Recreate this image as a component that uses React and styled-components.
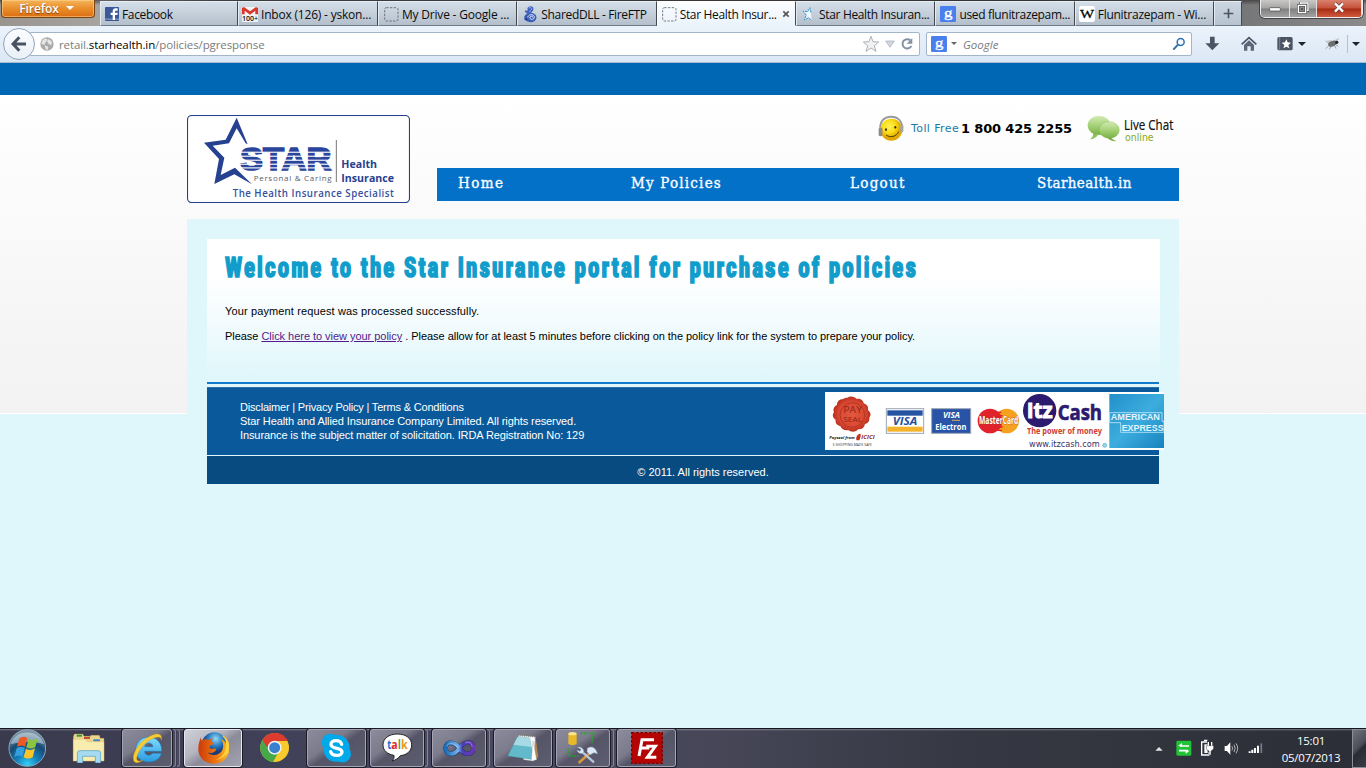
import React from "react";
import styled, { createGlobalStyle, css } from "styled-components";

const UI = '"Open Sans", "Noto Sans", sans-serif';
const BODY = '"Liberation Sans", Arial, sans-serif';

const Global = createGlobalStyle`
  * { box-sizing: border-box; }
  body { margin: 0; background: #dff7fb; font-family: ${BODY}; overflow: hidden; }
  svg { display: block; flex: none; }
`;

const Screen = styled.div`
  width: 1366px;
  height: 768px;
  display: flex;
  flex-direction: column;
  overflow: hidden;
`;

/* ---------- browser chrome ---------- */

const TabStrip = styled.div`
  height: 26px;
  flex: none;
  display: flex;
  background:
    linear-gradient(rgba(40, 38, 38, 0.6), rgba(60, 60, 60, 0) 5px),
    linear-gradient(90deg, #99948f 0, #a7a4a0 100px, #55565a 240px, #444 1040px, #77787a 1250px, #8b8b8c 1366px);
`;

const FirefoxButton = styled.button`
  width: 94px;
  height: 18px;
  margin: 0 5px 0 1px;
  padding: 0 3px 1px 0;
  display: flex;
  align-items: center;
  justify-content: center;
  gap: 7px;
  border: 1px solid #7a4412;
  border-top: 0;
  border-radius: 0 0 4px 4px;
  background: linear-gradient(#f4b55a, #e98d2b 50%, #dc6f12);
  box-shadow: inset 0 0 0 1px rgba(255, 215, 150, 0.55);
  color: #fff;
  font: 600 12px ${UI};
  line-height: 17px;
  letter-spacing: -0.1px;
  text-shadow: 0 1px 1px rgba(90, 40, 0, 0.7);
`;

const Triangle = styled.i`
  width: 0;
  height: 0;
  flex: none;
  border: ${(p) => p.$size || 4}px solid transparent;
  border-bottom: 0;
  border-top: ${(p) => p.$h || p.$size || 4}px solid ${(p) => p.$color || "#fff"};
`;

const Tab = styled.div`
  width: ${(p) => p.$w || 139.35}px;
  height: 25px;
  flex: none;
  display: flex;
  align-items: center;
  margin-top: 1px;
  padding: 1px 5px 0 ${(p) => p.$pl ?? 5}px;
  gap: ${(p) => p.$gap ?? 3}px;
  border-right: 1px solid #43484f;
  border-left: 1px solid #e3eaf1;
  border-top: 1px solid #e6edf4;
  border-bottom: 1px solid #6f7b88;
  background: linear-gradient(#d4dee8, #c3ced9 55%, #b3bfcb);
  color: #0c0c0c;
  font: 12px ${UI};
  letter-spacing: ${(p) => p.$ls ?? -0.34}px;
  white-space: nowrap;
  ${(p) =>
    p.$active &&
    css`
      background: linear-gradient(#fcfdfe, #ebf3fb);
      border-color: #fff #43484f #ebf3fb #fff;
    `}
`;

const TabLabel = styled.span`
  flex: 1;
`;

const NewTab = styled(Tab)`
  width: 28px;
  justify-content: center;
  padding: 0;
  background: linear-gradient(#cbd6e1, #b7c3cf);
`;

const WindowButtons = styled.div`
  width: 103px;
  height: 18px;
  margin-left: 18px;
  display: flex;
  border: 1px solid #eee;
  border-top: 0;
  border-radius: 0 0 5px 5px;
  overflow: hidden;
  box-shadow: 0 0 0 1px #444;
`;

const WindowButton = styled.button`
  width: ${(p) => p.$w}px;
  padding: 0 0 2px;
  display: flex;
  align-items: center;
  justify-content: center;
  border: 0;
  border-right: 1px solid #e0e0e0;
  background: ${(p) =>
    p.$close
      ? "linear-gradient(#d9826f, #c5513a 48%, #a82a12 52%, #cf5a3e)"
      : "linear-gradient(#c9c8c6, #a5a4a4 48%, #7f7f80 52%, #a3a3a4)"};
`;

const Toolbar = styled.div`
  height: 37px;
  flex: none;
  display: flex;
  align-items: center;
  padding: 0 0 1px 3px;
  background: linear-gradient(#ebf3fb, #dbe7f5);
  border-bottom: 1px solid #a7bace;
`;

const BackButton = styled.button`
  width: 32px;
  height: 32px;
  flex: none;
  padding: 0;
  display: flex;
  align-items: center;
  justify-content: center;
  border: 1px solid #93a4b8;
  border-radius: 50%;
  background: linear-gradient(#fbfdff, #e9f0f8);
  z-index: 1;
`;

const Field = styled.div`
  height: 24px;
  width: ${(p) => p.$w}px;
  flex: none;
  display: flex;
  align-items: center;
  border: 1px solid #a3b5c9;
  border-radius: 2px;
  background: #fff;
  font: 11.5px ${UI};
  color: #7c7c7c;
  white-space: nowrap;
`;

const UrlField = styled(Field)`
  margin-left: -6px;
  padding: 0 5px 0 10px;
  gap: 5px;
  letter-spacing: ${(p) => p.$ls}px;
  b { font-weight: 400; color: #000; }
`;

const Url = styled.span`
  flex: 1;
  padding-top: 1px;
`;

const SearchField = styled(Field)`
  margin-left: 6px;
  padding: 0 5px 0 4px;
  gap: 4px;
`;

const Placeholder = styled.em`
  flex: 1;
  padding: 1px 0 0 2px;
  letter-spacing: 0;
`;

const ToolIcons = styled.div`
  display: flex;
  align-items: center;
  padding-left: 13px;
`;

const ToolIcon = styled.span`
  display: flex;
  align-items: center;
  gap: 5px;
  margin-right: ${(p) => p.$mr || 0}px;
`;

const ToolDivider = styled.span`
  width: 1px;
  height: 18px;
  background: #b4c0cf;
  margin-right: 4px;
`;

/* ---------- web page ---------- */

const Page = styled.main`
  flex: 1;
  min-height: 0;
  display: flex;
  flex-direction: column;
  align-items: center;
  border-top: 32px solid #0067b4;
  background: linear-gradient(#fff, #f2f2f3) 0 0 / 100% 318px no-repeat, linear-gradient(#fff, #fff) 0 318px / 100% 1px no-repeat, #dff7fb;
`;

const Header = styled.header`
  width: 992px;
  height: 124px;
  flex: none;
  display: flex;
  gap: 27px;
  padding-top: 20px;
`;

const HeaderMain = styled.div`
  width: 742px;
  display: flex;
  flex-direction: column;
`;

const Contact = styled.div`
  height: 53px;
  display: flex;
  align-items: flex-start;
  padding-left: 441px;
`;

const TollFree = styled.span`
  width: 49px;
  margin: 7px 0 0 7px;
  color: #1a7ba8;
  font: 11px/14px "DejaVu Sans", Verdana, sans-serif;
  letter-spacing: 0.4px;
  white-space: nowrap;
`;

const Phone = styled.b`
  width: 111px;
  margin: 6px 0 0 1px;
  color: #000;
  font: bold 13px/16px "DejaVu Sans", Verdana, sans-serif;
  letter-spacing: -0.15px;
  white-space: nowrap;
`;

const ChatSlot = styled.div`
  margin: -5px -10px 0 14.5px;
`;

const Nav = styled.nav`
  height: 33px;
  display: flex;
  padding-left: 21px;
  background: #0471c9;
`;

const NavItem = styled.a`
  width: ${(p) => p.$w}px;
  color: #f8fcff;
  font: 15px/31px "DejaVu Serif Condensed", "DejaVu Serif", serif;
  font-stretch: condensed;
  letter-spacing: ${(p) => p.$ls}px;
  -webkit-text-stroke: 0.35px #f8fcff;
  white-space: nowrap;
`;

const Content = styled.section`
  width: 992px;
  flex: 1;
  padding: 20px 19px 0 20px;
  background: #dff7fb;
`;

const Panel = styled.article`
  height: 143px;
  padding: 12px 18px 0;
  background: linear-gradient(#fff, #fff 35px, #f2fbfd 85px, #dff7fb 138px);
`;

const Title = styled.h1`
  margin: 0 0 18px;
  height: 35px;
  color: #119dcb;
  font: bold 27px/35px "Liberation Sans Narrow", "Roboto Condensed", ${BODY};
  letter-spacing: 2.55px;
  -webkit-text-stroke: 1.6px #119dcb;
  white-space: nowrap;
  transform: scaleX(0.8475);
  transform-origin: 0 0;
`;

const Para = styled.p`
  margin: 0 0 11px;
  color: #000;
  font: 11px/14px ${BODY};
  letter-spacing: ${(p) => p.$ls || 0}px;
  white-space: nowrap;
  a { color: #551a8b; text-decoration: underline; }
`;

const Footer = styled.footer`
  width: 952px;
  border-top: 2px solid #1279cb;
  padding-top: 3px;
`;

const FooterMain = styled.div`
  height: 68px;
  display: flex;
  justify-content: space-between;
  padding: 5px 0 0 33px;
  background: #0a5a9b;
  border-top: 1px solid #2a6ea8;
`;

const FooterText = styled.div`
  padding-top: 7px;
  color: #fff;
  font: 11px/14px ${BODY};
  white-space: nowrap;
`;

const FooterLine = styled.div`
  letter-spacing: ${(p) => p.$ls}px;
`;

const CardsSlot = styled.div`
  margin: -1px -5px 0 0;
`;

const Copyright = styled.div`
  height: 29px;
  padding: 9px 0 0 40px;
  border-top: 1px solid #e6f6fb;
  background: #084b80;
  color: #fff;
  font: 11px/14px ${BODY};
  text-align: center;
`;

/* ---------- taskbar ---------- */

const Taskbar = styled.div`
  height: 40px;
  flex: none;
  display: flex;
  align-items: flex-start;
  border-top: 1px solid #16161e;
  background:
    linear-gradient(rgba(190, 190, 205, 0.5), rgba(190, 190, 205, 0) 2px),
    linear-gradient(90deg, #3a3a4d 0, #403f58 240px, #4b4a63 560px, #464657 720px, #363843 960px, #2c2e37 1366px);
`;

const Task = styled.div`
  width: ${(p) => p.$w}px;
  height: 38px;
  flex: none;
  margin-left: ${(p) => p.$ml || 0}px;
  display: flex;
  align-items: center;
  justify-content: center;
  ${(p) =>
    p.$open &&
    css`
      border: 1px solid #a4a4b2;
      border-radius: 3px;
      box-shadow: 0 0 0 1px #1c1c28;
      background: linear-gradient(145deg, #8b8b9b 0, #7b7b8c 38%, #555567 52%, #5d5d70 100%);
    `}
  ${(p) =>
    p.$active &&
    css`
      border-color: #e6e6ee;
      background: linear-gradient(145deg, #d0d0d8 0, #b5b5c0 38%, #8b8b9a 55%, #a2a2b0 100%);
    `}
`;

const Stack = styled.span`
  width: 3px;
  height: 38px;
  flex: none;
  margin-left: 1px;
  border: 1px solid #85859a;
  border-left: 0;
  border-radius: 0 3px 3px 0;
  background: #4a4a5c;
`;

const Tray = styled.div`
  height: 39px;
  margin-left: auto;
  display: flex;
  align-items: center;
`;

const Clock = styled.div`
  width: 62px;
  margin: 0 10px 0 16px;
  color: #fff;
  font: 11.5px/17px ${UI};
  letter-spacing: -0.25px;
  text-align: center;
`;

const ShowDesktop = styled.div`
  width: 14px;
  height: 39px;
  border: 1px solid #8b8e96;
  border-right: 0;
  background: linear-gradient(135deg, #70737d 0, #4c4f59 45%, #292b34 55%, #3a3c46);
`;

/* Drawings share one unit system: three drawing units to a pixel. */
const Art = ({ box, children }) => {
  const [, , w, h] = box.split(" ").map(Number);
  return (
    <svg viewBox={box} width={w / 3} height={h / 3}>
      {children}
    </svg>
  );
};

const Txt = ({ w, children, family = "Open Sans", ...rest }) => (
  <text
    textLength={w}
    lengthAdjust="spacingAndGlyphs"
    fontFamily={`"${family}", sans-serif`}
    {...rest}
  >
    {children}
  </text>
);

const FacebookIcon = () => (
  <Art box="0 0 42 42">
    <rect width="42" height="42" rx="2" fill="#3b5998" />
    <rect y="34" width="42" height="5" fill="#7187b5" />
    <path d="M23 39V24h-6v-7h6v-4c0-6 4-9 9-9h6v7h-4c-3 0-4 1-4 3v3h8l-1 7h-7v15z" fill="#fff" />
  </Art>
);

const GmailIcon = () => (
  <Art box="0 0 48 45">
    <rect width="48" height="45" rx="3" fill="#f3f3f3" />
    <path d="M0 22V3l6-3 18 13L42 0l6 3v19h-8V11L24 23 8 11v11z" fill="#d9372c" />
    <Txt x="0" y="42" w="48" fontSize="20" fill="#111" fontWeight="600">100+</Txt>
  </Art>
);

const BlankIcon = () => (
  <Art box="0 0 45 45">
    <rect x="2" y="2" width="40" height="40" rx="5" fill="none" stroke="#555c66" strokeWidth="2.4" strokeDasharray="7 4" />
  </Art>
);

const FtpIcon = () => (
  <Art box="0 0 45 51">
    <path d="M16 3c9-5 17 0 15 8-1 5-6 6-6 10 10 0 17 7 15 16-2 10-12 13-21 11-9-1-16-7-15-14 1-6 5-9 9-13-6-1-9-4-7-7 3-2 8 1 9-2-3-3-2-7 1-9z" fill="#3e5fb9" />
    <path d="M17 6c5-3 10 0 9 4-2 4-7 5-6 9" fill="none" stroke="#9db4ea" strokeWidth="3" />
    <path d="M30 35c0-5-7-6-9-2s2 8 7 7c7-1 8-10 2-13-8-3-16 2-16 9" fill="none" stroke="#dbe5fa" strokeWidth="3" />
    <path d="M4 39l10-4-4 8zM3 31l9-1" fill="#22378d" stroke="#22378d" />
  </Art>
);

const StarTabIcon = () => (
  <Art box="0 0 42 48">
    <path d="M27 20L24 5l-7 12-14-1 10 11-6 15 13-7 9 8" fill="#eef6fc" stroke="#3a97d0" strokeWidth="3" strokeDasharray="8 2" />
  </Art>
);

const GoogleIcon = () => (
  <Art box="0 0 48 48">
    <rect width="48" height="48" rx="4" fill="#4a80ee" />
    <Txt x="12" y="34" w="25" fontSize="40" family="Liberation Serif" fill="#fff" stroke="#fff" strokeWidth="1">g</Txt>
  </Art>
);

const WikiIcon = () => (
  <Art box="0 0 48 48">
    <rect width="48" height="48" rx="7" fill="#fff" />
    <Txt x="3" y="37" w="42" fontSize="38" family="Liberation Serif" stroke="#000" strokeWidth="0.8">W</Txt>
  </Art>
);

const StarLogo = () => (
  <Art box="21 30 669 264">
    <rect x="22.5" y="31.5" width="666" height="261" rx="13" fill="#fff" stroke="#243f8f" strokeWidth="3.4" />
    <path d="M203 118L170 38 137 104 72 113 117 162 103 237 163 208 216 238 165 188 122 210 133 158 98 122 147 115 170 70 197 115z" fill="#26418f" />
    <Txt x="180" y="196" w="274" fontSize="92" family="Liberation Sans" fontWeight="bold" fill="#2a459b" stroke="#2a459b" strokeWidth="4.5">STAR</Txt>
    {[140, 152, 164, 176, 187].map((y) => (
      <rect key={y} x="176" y={y} width="285" height="3.4" fill="#fff" />
    ))}
    <path d="M469 105V231" stroke="#777" strokeWidth="3" />
    <Txt x="221" y="227" w="236" fontSize="22" fill="#5c606a" letterSpacing="2">Personal &amp; Caring</Txt>
    <Txt x="484" y="189" w="107" fontSize="34" fontWeight="bold" fill="#26418f">Health</Txt>
    <Txt x="484" y="230" w="158" fontSize="34" fontWeight="bold" fill="#26418f">Insurance</Txt>
    <Txt x="158" y="277" w="485" fontSize="30" fontWeight="600" letterSpacing="1.5" fill="#3650a0">The Health Insurance Specialist</Txt>
  </Art>
);

const Smiley = () => (
  <Art box="235 28 78 82">
    <defs>
      <radialGradient id="smile" cx="0.4" cy="0.35">
        <stop offset="0" stopColor="#fff45a" />
        <stop offset="0.6" stopColor="#fbdc14" />
        <stop offset="1" stopColor="#e0a800" />
      </radialGradient>
    </defs>
    <path d="M243 78c-6-30 10-45 32-45 20 0 32 14 33 34" fill="none" stroke="#9a9a9e" strokeWidth="6" />
    <circle cx="275" cy="72" r="33" fill="url(#smile)" />
    <rect x="237" y="66" width="11" height="26" rx="5" fill="#8a8a8f" />
    <rect x="302" y="58" width="9" height="22" rx="4" fill="#a5a5a9" />
    <ellipse cx="259" cy="72" rx="3" ry="4" fill="#3a2e00" />
    <ellipse cx="287" cy="65" rx="3" ry="4" fill="#3a2e00" />
    <path d="M259 88c14 10 32 4 38-10" fill="none" stroke="#4b3a00" strokeWidth="3" />
  </Art>
);

const LiveChat = () => (
  <Art box="860 13 280 112">
    <defs>
      <linearGradient id="bubble" x2="0" y2="1">
        <stop offset="0" stopColor="#d3ebb4" />
        <stop offset="0.5" stopColor="#a6d279" />
        <stop offset="1" stopColor="#79b043" />
      </linearGradient>
    </defs>
    <path d="M878 82c2 8-3 15-10 19 12-1 21-7 25-14z" fill="#8cbf59" />
    <ellipse cx="896" cy="59" rx="34" ry="29" fill="url(#bubble)" />
    <path d="M930 90c2 7 8 13 20 17-15 1-26-5-31-13z" fill="#7aae45" />
    <ellipse cx="927" cy="73" rx="30" ry="25" fill="url(#bubble)" stroke="#7fb54d" />
    <Txt x="971" y="73" w="148" fontSize="46" fill="#111" stroke="#111" strokeWidth="0.7">Live Chat</Txt>
    <Txt x="974" y="106" w="86" fontSize="30" family="DejaVu Sans" fill="#83ab20">online</Txt>
  </Art>
);

const sealPath =
  "M82 68c8-6 22-4 28 4 10-2 20 4 21 13 9 3 15 10 13 20 9 8 10 16 4 23 1 11-5 17-13 19-2 11-10 17-20 16-8 9-22 9-30 2-11 3-21-3-24-12-10-2-16-10-14-19-9-5-11-15-5-22-4-10 1-19 9-22 0-11 8-18 17-17 3-3 8-5 14-5z";

const PaymentLogos = () => (
  <Art box="15 51 1017 174">
    <defs>
      <linearGradient id="amex" x2="1" y2="1">
        <stop offset="0" stopColor="#2190ca" />
        <stop offset="0.5" stopColor="#3dadde" />
        <stop offset="1" stopColor="#1683bf" />
      </linearGradient>
      <radialGradient id="seal">
        <stop offset="0" stopColor="#e2593f" />
        <stop offset="0.7" stopColor="#da4932" />
        <stop offset="1" stopColor="#b82e1d" />
      </radialGradient>
    </defs>
    <rect x="15" y="51" width="1017" height="174" fill="#fff" />
    <path d={sealPath} fill="url(#seal)" />
    <circle cx="97" cy="120" r="37" fill="none" stroke="#b93422" strokeWidth="3" />
    <g fill="#8e2418">
      <Txt x="70" y="114" w="56" fontSize="27">PAY</Txt>
      <Txt x="70" y="142" w="56" fontSize="22">SEAL</Txt>
    </g>
    <Txt x="28" y="193" w="76" fontSize="12" fontWeight="bold" fontStyle="italic" fill="#222">Payseal from</Txt>
    <path d="M110 196c-5-8 3-21 11-20 3 4-1 15-3 20z" fill="#c8321d" />
    <Txt x="124" y="193" w="40" fontSize="16" fontWeight="bold" fontStyle="italic" fill="#8e2b19">ICICI</Txt>
    <Txt x="38" y="213" w="118" fontSize="10" fill="#333">E-SHOPPING MADE SAFE</Txt>

    <rect x="199" y="101" width="112" height="74" fill="#fff" stroke="#9ba6b4" strokeWidth="3" />
    <rect x="202" y="106" width="106" height="16" fill="#2453a2" />
    <rect x="202" y="155" width="106" height="15" fill="#f4b32c" />
    <Txt x="218" y="150" w="74" fontSize="34" fontWeight="bold" fontStyle="italic" fill="#2350a0">VISA</Txt>

    <rect x="335" y="101" width="117" height="74" fill="#2853a6" stroke="#9ba6b4" strokeWidth="3" />
    <Txt x="369" y="130" w="51" fontSize="25" fontWeight="bold" fontStyle="italic" fill="#fff">VISA</Txt>
    <path d="M396 136h24" stroke="#d8a94a" strokeWidth="3" />
    <Txt x="346" y="166" w="93" fontSize="24" fontWeight="bold" fill="#fff">Electron</Txt>

    <circle cx="560" cy="138" r="37" fill="#f6a01f" />
    <circle cx="510" cy="138" r="37" fill="#e0222a" />
    <path d="M530 112h14M526 122h22M526 156h22M532 166h14" stroke="#e0222a" strokeWidth="4" />
    <Txt x="477" y="147" w="118" fontSize="29" fontWeight="bold" fill="#fff" stroke="#a5342a" strokeWidth="2" paintOrder="stroke">MasterCard</Txt>

    <circle cx="659" cy="107" r="50" fill="#2b1a6e" />
    <Txt x="620" y="130" w="78" fontSize="66" fontWeight="bold" fill="#fff" stroke="#fff" strokeWidth="3">Itz</Txt>
    <Txt x="713" y="135" w="133" fontSize="64" fontWeight="bold" fill="#2b1a6e" stroke="#2b1a6e" strokeWidth="2">Cash</Txt>
    <Txt x="621" y="178" w="225" fontSize="24" fontWeight="bold" fill="#cf3b35">The power of money</Txt>
    <Txt x="627" y="217" w="212" fontSize="24" family="DejaVu Sans" fill="#39306f">www.itzcash.com</Txt>
    <circle cx="854" cy="211" r="6" fill="#9bd6e8" stroke="#4cb0cd" strokeWidth="2" />

    <rect x="868" y="57" width="164" height="162" fill="url(#amex)" />
    <path d="M869 113h157v26h6v33H902v-29h-33z" fill="none" stroke="#bfe4f5" strokeWidth="2.5" />
    <g fontWeight="bold" fill="#e2f4fc">
      <Txt x="872" y="136" w="148" fontSize="26" family="Liberation Sans">AMERICAN</Txt>
      <Txt x="905" y="167" w="126" fontSize="26" family="Liberation Sans">EXPRESS</Txt>
    </g>
  </Art>
);

const StartOrb = () => (
  <Art box="23 28 116 114">
    <defs>
      <radialGradient id="orb" cx="0.5" cy="0.95" r="0.85">
        <stop offset="0" stopColor="#37d0f5" />
        <stop offset="0.35" stopColor="#1481bd" />
        <stop offset="0.7" stopColor="#174a72" />
        <stop offset="1" stopColor="#7b93a5" />
      </radialGradient>
    </defs>
    <circle cx="81" cy="85" r="55" fill="url(#orb)" stroke="#8aa9bd" strokeWidth="3" />
    <path d="M31 74a51 44 0 0 1 100 0c-30-10-68-8-100 0z" fill="#d7e7ef" opacity="0.5" />
    <path d="M57 56c8-6 16-6 24-1l-7 26c-8-5-16-5-24 1z" fill="#ee5a24" />
    <path d="M85 57c8 5 17 5 27-1l-7 26c-9 6-18 6-27 1z" fill="#8cc43f" />
    <path d="M49 86c8-6 16-5 24-1l-7 26c-8-5-16-5-24 1z" fill="#35a0e0" />
    <path d="M77 87c9 5 18 5 27-1l-7 27c-9 5-18 5-27 0z" fill="#fcc527" />
  </Art>
);

const ExplorerIcon = () => (
  <Art box="216 41 102 92">
    <path d="M220 52l3-8h25l4 7h20v-3h26l3 9h11v68l-92 0z" fill="#ead78c" stroke="#b99c44" />
    <rect x="230" y="46" width="16" height="6" fill="#2e9a43" />
    <rect x="252" y="53" width="18" height="6" fill="#cf4a30" />
    <rect x="280" y="60" width="20" height="6" fill="#3c84c4" />
    <path d="M220 60h36l5 7h51v58h-92z" fill="#f8ecae" stroke="#d1b765" />
    <path d="M232 131V101q0-7 8-7h54q8 0 8 7v30h-16v-20h-38v20z" fill="#a5daf0" stroke="#4a9ac2" strokeWidth="2" />
  </Art>
);

const IeIcon = () => (
  <Art box="392 32 96 96">
    <defs>
      <linearGradient id="ie" x2="0" y2="1">
        <stop offset="0" stopColor="#7fdcff" />
        <stop offset="1" stopColor="#2a9be0" />
      </linearGradient>
    </defs>
    <path d="M484 90h-51c0 12 14 17 24 6h26c-7 37-77 35-77-9 0-53 81-53 78 3zm-51-14h25c-2-15-23-15-25 0z" fill="url(#ie)" stroke="#197ec2" strokeWidth="1.5" />
    <path d="M483 58c6-30-25-23-52-2-31 24-42 68-22 68 6 0 12-3 18-7-32 13-16-30 10-52 24-20 48-24 46-7z" fill="#f8cc32" stroke="#cf9612" />
  </Art>
);

const FirefoxIcon = () => (
  <Art box="590 34 98 96">
    <defs>
      <radialGradient id="globe" cx="0.55" cy="0.25">
        <stop offset="0" stopColor="#8edcf7" />
        <stop offset="0.6" stopColor="#2876bd" />
        <stop offset="1" stopColor="#183a78" />
      </radialGradient>
      <linearGradient id="fox" x1="0" x2="1">
        <stop offset="0" stopColor="#cc3a08" />
        <stop offset="0.6" stopColor="#ee7a14" />
        <stop offset="1" stopColor="#fcc931" />
      </linearGradient>
    </defs>
    <circle cx="642" cy="74" r="39" fill="url(#globe)" />
    <path d="M602 50c0 6 1 8 3 10 6-5 15-5 21-2 6-4 12-5 12-5l-5 8 8 8-12 6c-5 6 2 12 10 9 6-2 10 2 7 6-7 9-20 8-24 5 10 14 38 10 45-10 4-12 0-24-6-30 9 2 15 9 16 15 1-9-3-20-9-27 13 7 21 24 20 40-2 28-22 46-48 46-27 0-47-20-46-45 0-13 4-27 8-34z" fill="url(#fox)" />
    <path d="M667 48c12 9 15 31 5 48-6 11-16 19-28 21 23 0 39-16 42-38-1-16-9-29-19-35z" fill="#fddc45" opacity="0.8" />
  </Art>
);

const ChromeIcon = () => (
  <Art box="780 40 88 88">
    <circle cx="824" cy="84" r="43" fill="#f7cb2c" />
    <path d="M787 62a43 43 0 0 1 76 2h-39l-20 30z" fill="#dc3b2e" />
    <path d="M787 62a43 43 0 0 0 32 65l20-35-31 0z" fill="#45a849" />
    <circle cx="824" cy="84" r="21" fill="#f2f4f6" />
    <circle cx="824" cy="84" r="16.5" fill="#3a80d0" />
  </Art>
);

const SkypeIcon = () => (
  <Art box="0 0 92 92">
    <path d="M28 2c9 0 12 4 18 4 24-1 42 18 40 43 8 14 3 31-10 37-8 4-16 2-22 0C25 90 6 71 8 46-4 26 6 2 28 2z" fill="#00a9ea" />
    <path d="M62 34c-4-15-32-14-32 0 0 17 33 8 33 23 0 14-30 14-34-1" fill="none" stroke="#fff" strokeWidth="10" strokeLinecap="round" />
  </Art>
);

const TalkIcon = () => (
  <Art box="90 38 92 88">
    <path d="M136 41c27 0 43 14 43 33 0 18-14 30-34 32-5 7-13 13-25 16 6-6 7-11 6-17-19-3-33-14-33-31 0-19 17-33 43-33z" fill="#fff" stroke="#222" strokeWidth="3" />
    <g fontSize="37" fontWeight="bold">
      <Txt x="106" y="87" w="12" fill="#2569d4">t</Txt>
      <Txt x="118" y="87" w="19" fill="#e12a26">a</Txt>
      <Txt x="138" y="87" w="8" fill="#35a236">l</Txt>
      <Txt x="147" y="87" w="20" fill="#f09515">k</Txt>
    </g>
  </Art>
);

const VisualStudioIcon = () => (
  <Art box="274 56 98 56">
    <defs>
      <linearGradient id="vs">
        <stop offset="0" stopColor="#1b6fb8" />
        <stop offset="0.45" stopColor="#74b4ea" />
        <stop offset="0.6" stopColor="#4a3fb8" />
        <stop offset="1" stopColor="#6a38b4" />
      </linearGradient>
    </defs>
    <path d="M323 84C307 61 282 63 282 84s25 23 41 0 42-23 42-1-26 24-42 1z" fill="none" stroke="#1f2a55" strokeWidth="14" />
    <path d="M323 84C307 61 282 63 282 84s25 23 41 0 42-23 42-1-26 24-42 1z" fill="none" stroke="url(#vs)" strokeWidth="12" />
    <path d="M285 77c5-11 23-10 34 5M341 67c12-5 20 2 20 12" fill="none" stroke="#c6e2fa" strokeWidth="2" opacity="0.7" />
  </Art>
);

const NotepadIcon = () => (
  <Art box="470 38 98 90">
    <path d="M556 52l8 58-18 13-6-6z" fill="#b08a48" />
    <path d="M503 45l52 4-5 73-30-4z" fill="#fafafa" stroke="#999" />
    <path d="M502 49l36 4 12 65-78-11z" fill="#62b9c9" stroke="#3f94a6" />
    <path d="M502 49l36 4 5 27-54-7z" fill="#bfe6ee" opacity="0.75" />
    <path d="M548 62l11 56-16 4z" fill="#fff" stroke="#999" />
    <path d="M504 44l51 4" stroke="#777" strokeWidth="7" strokeDasharray="2 4" />
  </Art>
);

const SqlIcon = () => (
  <Art box="649 35 98 100">
    <path d="M653 44v28c0 7 25 7 25 0V44z" fill="#e9b928" />
    <ellipse cx="665.5" cy="43" rx="12.5" ry="5" fill="#fce68c" />
    <path d="M692 42h33v32M653 88v22h30" fill="none" stroke="#1fae22" strokeWidth="5" strokeDasharray="4 4" />
    <path d="M716 102l-32 29" stroke="#d69737" strokeWidth="8" />
    <path d="M696 99l34 30" stroke="#b8c8da" strokeWidth="7" />
    <path d="M680 84c10-4 22 4 19 17-10 5-20-2-20-9l9 4 3-6zM710 86c14-8 26-1 31 18l-11-4-12 7-9-10z" fill="#dbe8f6" stroke="#7b8fa8" strokeWidth="1.5" />
  </Art>
);

const FileZillaIcon = () => (
  <Art box="843 36 96 96">
    <rect x="845" y="38" width="92" height="92" fill="#b40404" stroke="#7d0000" strokeWidth="4" strokeDasharray="8 5" />
    <path d="M867 108l9-49h36M872 84h26M889 79h27l-24 33h27" fill="none" stroke="#fff" strokeWidth="9" />
  </Art>
);

const TrayIcons = () => (
  <Art box="76 60 328 56">
    <path d="M77 95l11-11 11 11z" fill="#e4e4e8" />
    <rect x="140" y="65" width="45" height="45" rx="4" fill="#20c236" />
    <path d="M150 81h28M175 95h-27" stroke="#fff" strokeWidth="5" />
    <path d="M157 72l-12 9h12zM168 104l12-9h-12z" fill="#fff" />
    <path d="M232 69h-16v39h22v-9M223 64h10" fill="none" stroke="#fff" strokeWidth="4" />
    <path d="M224 76v26h10V76z" fill="#fff" />
    <path d="M230 80h22v8q-3 7-8 8v12h-6V96q-7-1-8-8z" fill="#fff" stroke="#33343f" strokeWidth="1.5" />
    <path d="M236 80V69M246 80V69" stroke="#fff" strokeWidth="4" />
    <path d="M285 81h7l10-11v37l-10-11h-7z" fill="#fff" />
    <path d="M307 82q4 6 0 12M313 77q7 11 0 22M319 73q10 15 0 30" fill="none" stroke="#d6d6da" strokeWidth="2.4" />
    <path d="M360 102v-5M368 102v-10M376 102V87M385 102V80" stroke="#fff" strokeWidth="6" />
    <path d="M395 102V73" stroke="#7b7d86" strokeWidth="5" />
  </Art>
);

export default function App() {
  return (
    <>
      <Global />
      <Screen>
        <TabStrip>
          <FirefoxButton>
            Firefox <Triangle $size={4} $h={4} />
          </FirefoxButton>
          <Tab $w={138} $pl={4}><FacebookIcon /><TabLabel>Facebook</TabLabel></Tab>
          <Tab $w={140} $pl={3} $gap={3} $ls={-0.2}><GmailIcon /><TabLabel>Inbox (126) - yskon...</TabLabel></Tab>
          <Tab $ls={-0.2}><BlankIcon /><TabLabel>My Drive - Google ...</TabLabel></Tab>
          <Tab><FtpIcon /><TabLabel>SharedDLL - FireFTP</TabLabel></Tab>
          <Tab $active $pl={4} $gap={3}>
            <BlankIcon /><TabLabel>Star Health Insur...</TabLabel>
            <Art box="0 0 24 24"><path d="M4 4l16 16M20 4L4 20" stroke="#555" strokeWidth="5" /></Art>
          </Tab>
          <Tab><StarTabIcon /><TabLabel>Star Health Insuran...</TabLabel></Tab>
          <Tab $pl={4} $gap={3}><GoogleIcon /><TabLabel>used flunitrazepam...</TabLabel></Tab>
          <Tab $pl={3} $gap={3} $ls={-0.27}><WikiIcon /><TabLabel>Flunitrazepam - Wi...</TabLabel></Tab>
          <NewTab>
            <Art box="0 0 33 33"><path d="M16.5 2v29M2 16.5h29" stroke="#4b5563" strokeWidth="5" /></Art>
          </NewTab>
          <WindowButtons>
            <WindowButton $w={29}>
              <Art box="0 0 36 27"><rect x="2" y="14" width="32" height="10" rx="2" fill="#fff" stroke="#555" strokeWidth="2.5" /></Art>
            </WindowButton>
            <WindowButton $w={27}>
              <Art box="0 0 36 36">
                <path d="M11 3h22v22H11z" fill="none" stroke="#555" strokeWidth="8" />
                <path d="M11 3h22v22H11z" fill="none" stroke="#fff" strokeWidth="4" />
                <path d="M4 10h22v22H4z" fill="#888" stroke="#555" strokeWidth="8" />
                <path d="M4 10h22v22H4z" fill="none" stroke="#fff" strokeWidth="4" />
                <path d="M12 18h6v6h-6z" fill="#555" />
              </Art>
            </WindowButton>
            <WindowButton $w={46} $close>
              <Art box="0 0 36 33">
                <path d="M6 4l24 25M30 4L6 29" stroke="#6a3b35" strokeWidth="11" />
                <path d="M6 4l24 25M30 4L6 29" stroke="#fff" strokeWidth="7" />
              </Art>
            </WindowButton>
          </WindowButtons>
        </TabStrip>

        <Toolbar>
          <BackButton>
            <Art box="0 0 48 48"><path d="M45 24H8M25 4L6 24l19 20" fill="none" stroke="#485262" strokeWidth="9" /></Art>
          </BackButton>
          <UrlField $w={891} $ls={-0.1}>
            <Art box="0 0 42 42">
              <circle cx="21" cy="21" r="20" fill="#a9a9a9" />
              <path d="M8 9l9-5 6 4-6 7-4 9-9-4zM26 6l10 8-2 11-8-4-5-8zM14 25l11 4-2 10-6-2z" fill="#e6e6e6" />
            </Art>
            <Url>retail.<b>starhealth.in</b>/policies/pgresponse</Url>
            <Art box="0 0 54 54">
              <path d="M27 4l6 16 17 1-13 11 5 17-15-10-15 10 5-17L4 21l17-1z" fill="#f1f1f1" stroke="#a0a6ad" strokeWidth="2.6" />
            </Art>
            <Art box="0 0 30 30"><path d="M2 6h26L15 25z" fill="#d3d8df" stroke="#a2abb7" strokeWidth="2" /></Art>
            <Art box="0 0 42 42">
              <path d="M31 10a14 14 0 1 0 3 17" fill="none" stroke="#8592a2" strokeWidth="6" />
              <path d="M37 3v17H20z" fill="#8592a2" />
            </Art>
          </UrlField>
          <SearchField $w={266}>
            <GoogleIcon />
            <Triangle $size={3} $h={3} $color="#666" />
            <Placeholder>Google</Placeholder>
            <Art box="0 0 42 42">
              <circle cx="26" cy="15" r="10.5" fill="#f4f9ff" stroke="#3270b0" strokeWidth="4.5" />
              <path d="M18 23L4 38" stroke="#3270b0" strokeWidth="6" />
            </Art>
          </SearchField>
          <ToolIcons>
            <ToolIcon $mr={21}>
              <Art box="0 0 45 45"><path d="M15 2h14v20h14L22 43 1 22h14z" fill="#4a5463" /></Art>
            </ToolIcon>
            <ToolIcon $mr={20}>
              <Art box="0 0 48 48">
                <path d="M2 25L24 5l22 20" fill="none" stroke="#4a5463" strokeWidth="5" />
                <path d="M9 27L24 13l15 14v17H29V31H19v13H9z" fill="#5d6775" />
              </Art>
            </ToolIcon>
            <ToolIcon $mr={18}>
              <Art box="0 0 48 45">
                <rect x="1" y="3" width="46" height="40" rx="5" fill="#4a5463" />
                <path d="M8 3v40" stroke="#7c8694" strokeWidth="3" />
                <path d="M28 10l4 9 10 1-8 7 3 10-9-5-9 5 3-10-8-7 10-1z" fill="#fff" />
              </Art>
              <Triangle $size={4} $h={4} $color="#1d242e" />
            </ToolIcon>
            <ToolIcon $mr={7}>
              <Art box="0 0 48 42">
                <path d="M2 12l20-3 8 9-16 4zM26 13l16-9 4 3-13 12z" fill="#c4c8cb" />
                <ellipse cx="25" cy="20" rx="13" ry="8" fill="#6b6e70" transform="rotate(-20 25 20)" />
                <circle cx="38" cy="16" r="5" fill="#222" />
                <path d="M16 24L5 35M22 26l-6 11M31 25l5 10M34 22l9 6" stroke="#777" strokeWidth="2" />
              </Art>
            </ToolIcon>
            <ToolDivider />
            <Triangle $size={4} $h={4} $color="#1d242e" />
          </ToolIcons>
        </Toolbar>

        <Page>
          <Header>
            <StarLogo />
            <HeaderMain>
              <Contact>
                <Smiley />
                <TollFree>Toll Free</TollFree>
                <Phone>1 800 425 2255</Phone>
                <ChatSlot><LiveChat /></ChatSlot>
              </Contact>
              <Nav>
                <NavItem $w={173} $ls={1.4}>Home</NavItem>
                <NavItem $w={219} $ls={1.2}>My Policies</NavItem>
                <NavItem $w={187} $ls={1.3}>Logout</NavItem>
                <NavItem $w={110} $ls={0.4}>Starhealth.in</NavItem>
              </Nav>
            </HeaderMain>
          </Header>
          <Content>
            <Panel>
              <Title>Welcome to the Star Insurance portal for purchase of policies</Title>
              <Para $ls={0.125}>Your payment request was processed successfully.</Para>
              <Para $ls={-0.037}>
                Please <a>Click here to view your policy</a> . Please allow for at least 5 minutes before clicking on the policy link for the system to prepare your policy.
              </Para>
            </Panel>
            <Footer>
              <FooterMain>
                <FooterText>
                  <FooterLine $ls={-0.19}>Disclaimer | Privacy Policy | Terms &amp; Conditions</FooterLine>
                  <FooterLine $ls={-0.09}>Star Health and Allied Insurance Company Limited. All rights reserved.</FooterLine>
                  <FooterLine $ls={-0.1}>Insurance is the subject matter of solicitation. IRDA Registration No: 129</FooterLine>
                </FooterText>
                <CardsSlot><PaymentLogos /></CardsSlot>
              </FooterMain>
              <Copyright>© 2011. All rights reserved.</Copyright>
            </Footer>
          </Content>
        </Page>

        <Taskbar>
          <Task $w={54}><StartOrb /></Task>
          <Task $w={60} $ml={5}><ExplorerIcon /></Task>
          <Task $w={50} $ml={3} $open><IeIcon /></Task>
          <Stack /><Stack />
          <Task $w={58} $ml={4} $open $active><FirefoxIcon /></Task>
          <Task $w={58} $ml={4}><ChromeIcon /></Task>
          <Task $w={59} $ml={3} $open><SkypeIcon /></Task>
          <Task $w={54} $ml={4} $open><TalkIcon /></Task>
          <Stack />
          <Task $w={54} $ml={4} $open><VisualStudioIcon /></Task>
          <Stack />
          <Task $w={58} $ml={4} $open><NotepadIcon /></Task>
          <Task $w={54} $ml={4} $open><SqlIcon /></Task>
          <Stack />
          <Task $w={59} $ml={3} $open><FileZillaIcon /></Task>
          <Tray>
            <TrayIcons />
            <Clock>15:01<br />05/07/2013</Clock>
            <ShowDesktop />
          </Tray>
        </Taskbar>
      </Screen>
    </>
  );
}
